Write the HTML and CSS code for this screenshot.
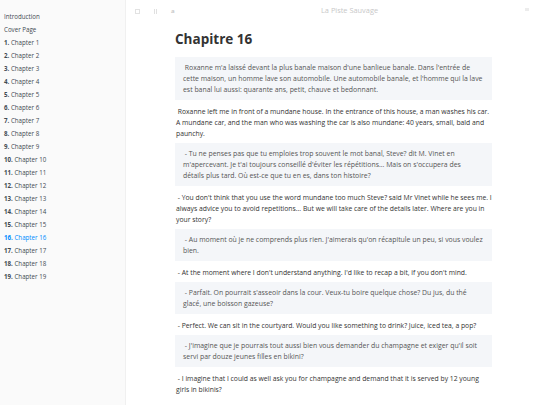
FILE: index.html
```html
<!DOCTYPE html>
<html lang="fr">
<head>
<meta charset="utf-8">
<title>Chapitre 16 · La Piste Sauvage</title>
<link rel="stylesheet" href="styles.css">
</head>
<body>
<div class="book">
  <nav class="summary">
    <ul class="toc">
      <li class="toc-item">Introduction</li>
      <li class="toc-item">Cover Page</li>
      <li class="toc-item"><b>1.</b> Chapter 1</li>
      <li class="toc-item"><b>2.</b> Chapter 2</li>
      <li class="toc-item"><b>3.</b> Chapter 3</li>
      <li class="toc-item"><b>4.</b> Chapter 4</li>
      <li class="toc-item"><b>5.</b> Chapter 5</li>
      <li class="toc-item"><b>6.</b> Chapter 6</li>
      <li class="toc-item"><b>7.</b> Chapter 7</li>
      <li class="toc-item"><b>8.</b> Chapter 8</li>
      <li class="toc-item"><b>9.</b> Chapter 9</li>
      <li class="toc-item"><b>10.</b> Chapter 10</li>
      <li class="toc-item"><b>11.</b> Chapter 11</li>
      <li class="toc-item"><b>12.</b> Chapter 12</li>
      <li class="toc-item"><b>13.</b> Chapter 13</li>
      <li class="toc-item"><b>14.</b> Chapter 14</li>
      <li class="toc-item"><b>15.</b> Chapter 15</li>
      <li class="toc-item active"><b>16.</b> Chapter 16</li>
      <li class="toc-item"><b>17.</b> Chapter 17</li>
      <li class="toc-item"><b>18.</b> Chapter 18</li>
      <li class="toc-item"><b>19.</b> Chapter 19</li>
    </ul>
  </nav>
  <main class="body">
    <header class="topbar">
      <div class="tools">
        <svg class="icon" width="5" height="5" viewBox="0 0 5 5"><rect x="0.5" y="0.5" width="4" height="4" fill="none" stroke="#e2e2e2" stroke-width="1"/></svg>
        <svg class="icon" width="5" height="5" viewBox="0 0 5 5"><rect x="1" y="0" width="1" height="5" fill="#e0e0e0"/><rect x="3" y="0" width="1" height="5" fill="#e0e0e0"/></svg>
        <span class="font-a">a</span>
      </div>
      <div class="title">La Piste Sauvage</div>
      <div class="share"><svg width="4" height="3" viewBox="0 0 4 3"><rect width="4" height="3" fill="#ececec"/></svg></div>
    </header>
    <article class="page">
      <h1 class="heading">Chapitre 16</h1>
      <blockquote class="fr"><p>&nbsp;Roxanne m'a laissé devant la plus banale maison d'une banlieue banale. Dans l'entrée de cette maison, un homme lave son automobile. Une automobile banale, et l'homme qui la lave est banal lui aussi: quarante ans, petit, chauve et bedonnant.</p></blockquote>
      <p class="en">&nbsp;Roxanne left me in front of a mundane house. In the entrance of this house, a man washes his car. A mundane car, and the man who was washing the car is also mundane: 40 years, small, bald and paunchy.</p>
      <blockquote class="fr"><p>&nbsp;- Tu ne penses pas que tu emploies trop souvent le mot banal, Steve? dit M. Vinet en m'apercevant. Je t'ai toujours conseillé d'éviter les répétitions... Mais on s'occupera des détails plus tard. Où est-ce que tu en es, dans ton histoire?</p></blockquote>
      <p class="en">&nbsp;- You don't think that you use the word mundane too much Steve? said Mr Vinet while he sees me. I always advice you to avoid repetitions... But we will take care of the details later. Where are you in your story?</p>
      <blockquote class="fr"><p>&nbsp;- Au moment où je ne comprends plus rien. J'aimerais qu'on récapitule un peu, si vous voulez bien.</p></blockquote>
      <p class="en">&nbsp;- At the moment where I don't understand anything. I'd like to recap a bit, if you don't mind.</p>
      <blockquote class="fr"><p>&nbsp;- Parfait. On pourrait s'asseoir dans la cour. Veux-tu boire quelque chose? Du jus, du thé glacé, une boisson gazeuse?</p></blockquote>
      <p class="en">&nbsp;- Perfect. We can sit in the courtyard. Would you like something to drink? Juice, iced tea, a pop?</p>
      <blockquote class="fr"><p>&nbsp;- J'imagine que je pourrais tout aussi bien vous demander du champagne et exiger qu'il soit servi par douze jeunes filles en bikini?</p></blockquote>
      <p class="en">&nbsp;- I imagine that I could as well ask you for champagne and demand that it is served by 12 young girls in bikinis?</p>
    </article>
  </main>
</div>
</body>
</html>
```
FILE: styles.css
```css
html, body {
  margin: 0;
  padding: 0;
  background: #fff;
  overflow: hidden;
}
body {
  font-family: "Open Sans", "Liberation Sans", sans-serif;
  color: #333;
  width: 540px;
  height: 405px;
}
.book {
  display: flex;
  height: 405px;
}
.summary {
  width: 125px;
  flex: none;
  background: #fafafa;
  border-right: 1px solid #f0f0f0;
}
.toc {
  list-style: none;
  margin: 0;
  padding: 10px 0 0 4px;
}
.toc-item {
  font-size: 6.2px;
  line-height: 13px;
  height: 13px;
  color: #3f4a52;
  white-space: nowrap;
}
.toc-item b {
  font-weight: 700;
}
.toc-item.active {
  color: #008cff;
}
.body {
  flex: 1;
  min-width: 0;
}
.topbar {
  height: 22px;
  display: flex;
  align-items: center;
  position: relative;
}
.tools {
  display: flex;
  align-items: center;
  gap: 13px;
  padding-left: 9px;
}
.icon {
  display: block;
}
.font-a {
  font-size: 6px;
  font-weight: 700;
  color: #c9c9c9;
  line-height: 6px;
}
.title {
  position: absolute;
  left: 195px;
  top: 5px;
  font-size: 7.4px;
  line-height: 10px;
  color: #c8c8c8;
}
.share {
  position: absolute;
  right: 11px;
  top: 5px;
  line-height: 0;
}
.page {
  width: 317px;
  margin-left: 49px;
}
.heading {
  margin: 0 0 9px;
  padding-top: 8px;
  font-size: 13.5px;
  line-height: 18px;
  font-weight: 700;
  color: #333;
}
.fr {
  margin: 0 0 6px;
  padding: 5px 8.5px 5px 8px;
  background: #f4f6f9;
  color: #555;
}
.fr p {
  margin: 0;
  font-size: 6.9px;
  line-height: 11px;
}
.en {
  margin: 0 0 4px;
  padding-left: 1px;
  font-size: 6.8px;
  line-height: 11px;
  color: #333;
}
```
